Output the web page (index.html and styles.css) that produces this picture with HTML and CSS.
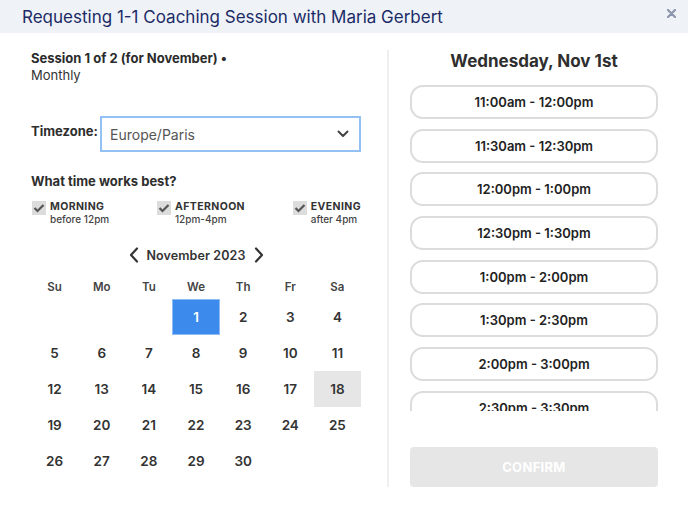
FILE: index.html
```html
<!DOCTYPE html>
<html lang="en">
<head>
<meta charset="utf-8">
<title>Requesting 1-1 Coaching Session</title>
<link rel="stylesheet" href="styles.css">
</head>
<body>
<div class="modal">
  <div class="header">
    <h1 class="title">Requesting 1-1 Coaching Session with Maria Gerbert</h1>
    <svg class="close" width="9" height="9" viewBox="0 0 9 9"><path d="M1 1L8 8M8 1L1 8" stroke="#8b96ad" stroke-width="2.2" stroke-linecap="round"/></svg>
  </div>
  <div class="main">
    <div class="left">
      <div class="session">Session 1 of 2 (for November) •</div>
      <div class="freq">Monthly</div>
      <div class="tz-row">
        <span class="tz-label">Timezone:</span>
        <div class="select">
          <span>Europe/Paris</span>
          <svg width="12" height="8" viewBox="0 0 12 8"><path d="M1.5 1.5L6 6L10.5 1.5" fill="none" stroke="#444" stroke-width="2" stroke-linecap="round" stroke-linejoin="round"/></svg>
        </div>
      </div>
      <div class="q">What time works best?</div>
      <div class="times">
        <div class="opt">
          <span class="cb"><svg width="12" height="10" viewBox="0 0 12 10"><path d="M1.5 5L4.5 8L10.5 2" fill="none" stroke="#555" stroke-width="2.2"/></svg></span>
          <div><div class="opt-t">MORNING</div><div class="opt-s">before 12pm</div></div>
        </div>
        <div class="opt">
          <span class="cb"><svg width="12" height="10" viewBox="0 0 12 10"><path d="M1.5 5L4.5 8L10.5 2" fill="none" stroke="#555" stroke-width="2.2"/></svg></span>
          <div><div class="opt-t">AFTERNOON</div><div class="opt-s">12pm-4pm</div></div>
        </div>
        <div class="opt">
          <span class="cb"><svg width="12" height="10" viewBox="0 0 12 10"><path d="M1.5 5L4.5 8L10.5 2" fill="none" stroke="#555" stroke-width="2.2"/></svg></span>
          <div><div class="opt-t">EVENING</div><div class="opt-s">after 4pm</div></div>
        </div>
      </div>
      <div class="nav">
        <svg width="10" height="16" viewBox="0 0 10 16"><path d="M8 1.5L2 8L8 14.5" fill="none" stroke="#333" stroke-width="2.2" stroke-linecap="round" stroke-linejoin="round"/></svg>
        <span class="month">November 2023</span>
        <svg width="10" height="16" viewBox="0 0 10 16"><path d="M2 1.5L8 8L2 14.5" fill="none" stroke="#333" stroke-width="2.2" stroke-linecap="round" stroke-linejoin="round"/></svg>
      </div>
      <div class="cal">
        <div class="wd">Su</div><div class="wd">Mo</div><div class="wd">Tu</div><div class="wd">We</div><div class="wd">Th</div><div class="wd">Fr</div><div class="wd">Sa</div>
        <div class="d"></div><div class="d"></div><div class="d"></div><div class="d sel">1</div><div class="d">2</div><div class="d">3</div><div class="d">4</div>
        <div class="d">5</div><div class="d">6</div><div class="d">7</div><div class="d">8</div><div class="d">9</div><div class="d">10</div><div class="d">11</div>
        <div class="d">12</div><div class="d">13</div><div class="d">14</div><div class="d">15</div><div class="d">16</div><div class="d">17</div><div class="d today">18</div>
        <div class="d">19</div><div class="d">20</div><div class="d">21</div><div class="d">22</div><div class="d">23</div><div class="d">24</div><div class="d">25</div>
        <div class="d">26</div><div class="d">27</div><div class="d">28</div><div class="d">29</div><div class="d">30</div><div class="d"></div><div class="d"></div>
      </div>
    </div>
    <div class="divider"></div>
    <div class="right">
      <h2 class="day">Wednesday, Nov 1st</h2>
      <div class="slots">
        <div class="slot">11:00am - 12:00pm</div>
        <div class="slot">11:30am - 12:30pm</div>
        <div class="slot">12:00pm - 1:00pm</div>
        <div class="slot">12:30pm - 1:30pm</div>
        <div class="slot">1:00pm - 2:00pm</div>
        <div class="slot">1:30pm - 2:30pm</div>
        <div class="slot">2:00pm - 3:00pm</div>
        <div class="slot">2:30pm - 3:30pm</div>
      </div>
      <button class="confirm" type="button">CONFIRM</button>
    </div>
  </div>
</div>
</body>
</html>
```
FILE: styles.css
```css
* { box-sizing: border-box; }
html, body { margin: 0; padding: 0; }
body {
  width: 688px;
  height: 505px;
  background: #fff;
  font-family: "Inter", "Open Sans", sans-serif;
  color: #2e2e2e;
  overflow: hidden;
}
.header {
  height: 33px;
  background: #eff3f8;
  display: flex;
  align-items: center;
  justify-content: space-between;
  padding: 0 12px 0 22px;
}
.title {
  margin: 0;
  font-size: 17px;
  font-weight: 400;
  color: #1c2b66;
  letter-spacing: 0;
}
.close { margin-top: -6px; }
.main {
  display: flex;
  padding-top: 17px;
}
.left {
  width: 330px;
  margin-left: 31px;
}
.session {
  font-size: 13px;
  font-weight: 700;
  line-height: 17px;
  color: #2b2b2b;
}
.freq {
  font-size: 13px;
  line-height: 17px;
  color: #333;
}
.tz-row {
  display: flex;
  align-items: center;
  margin-top: 32px;
}
.tz-label {
  font-size: 13px;
  font-weight: 700;
  width: 69px;
  margin-top: -6px;
}
.select {
  flex: 1;
  height: 36px;
  border: 2px solid #93c1f3;
  display: flex;
  align-items: center;
  justify-content: space-between;
  padding: 0 10px 0 8px;
  font-size: 14px;
  color: #555;
}
.q {
  margin-top: 21px;
  font-size: 13px;
  font-weight: 700;
  line-height: 17px;
}
.times {
  display: flex;
  justify-content: space-between;
  margin-top: 11px;
  padding-left: 1px;
}
.opt {
  display: flex;
  gap: 4px;
}
.cb {
  width: 14px;
  height: 14px;
  background: #dcdcdc;
  display: flex;
  align-items: center;
  justify-content: center;
}
.opt-t {
  font-size: 10.5px;
  font-weight: 700;
  line-height: 13px;
  letter-spacing: 0.4px;
  color: #333;
  margin-top: -1px;
}
.opt-s {
  font-size: 10px;
  line-height: 12px;
  color: #444;
  font-weight: 500;
}
.nav {
  display: flex;
  align-items: center;
  justify-content: center;
  gap: 8px;
  height: 20px;
  margin-top: 20px;
}
.month {
  font-size: 12.5px;
  font-weight: 600;
  color: #333;
  letter-spacing: 0.1px;
}
.cal {
  display: grid;
  grid-template-columns: repeat(7, 1fr);
  grid-auto-rows: 36px;
  grid-template-rows: 24px;
  margin-top: 10px;
}
.wd {
  display: flex;
  align-items: center;
  justify-content: center;
  font-size: 11.5px;
  font-weight: 600;
  color: #444;
}
.d {
  display: flex;
  align-items: center;
  justify-content: center;
  font-size: 13.5px;
  font-weight: 600;
  color: #333;
}
.d.sel {
  background: #3c8aeb;
  border: 1px solid #8dbcf5;
  color: #fff;
}
.d.today {
  background: #e6e6e6;
}
.divider {
  width: 2px;
  height: 437px;
  background: #efefef;
  margin-left: 26px;
}
.right {
  width: 248px;
  margin-left: 21px;
}
.day {
  margin: 0;
  text-align: center;
  font-size: 17px;
  font-weight: 700;
  line-height: 22px;
  color: #2e2e2e;
}
.slots {
  margin-top: 13px;
  height: 326px;
  overflow: hidden;
  display: flex;
  flex-direction: column;
  gap: 9.7px;
}
.slot {
  flex: none;
  height: 34px;
  border: 2px solid #dcdcdc;
  border-radius: 13px;
  display: flex;
  align-items: center;
  justify-content: center;
  font-size: 13px;
  font-weight: 600;
  color: #222;
}
.confirm {
  display: block;
  width: 100%;
  height: 40px;
  margin-top: 36px;
  border: none;
  border-radius: 4px;
  background: #e6e6e6;
  color: #fff;
  font-family: inherit;
  font-size: 13px;
  font-weight: 700;
  letter-spacing: 0.3px;
}
```
